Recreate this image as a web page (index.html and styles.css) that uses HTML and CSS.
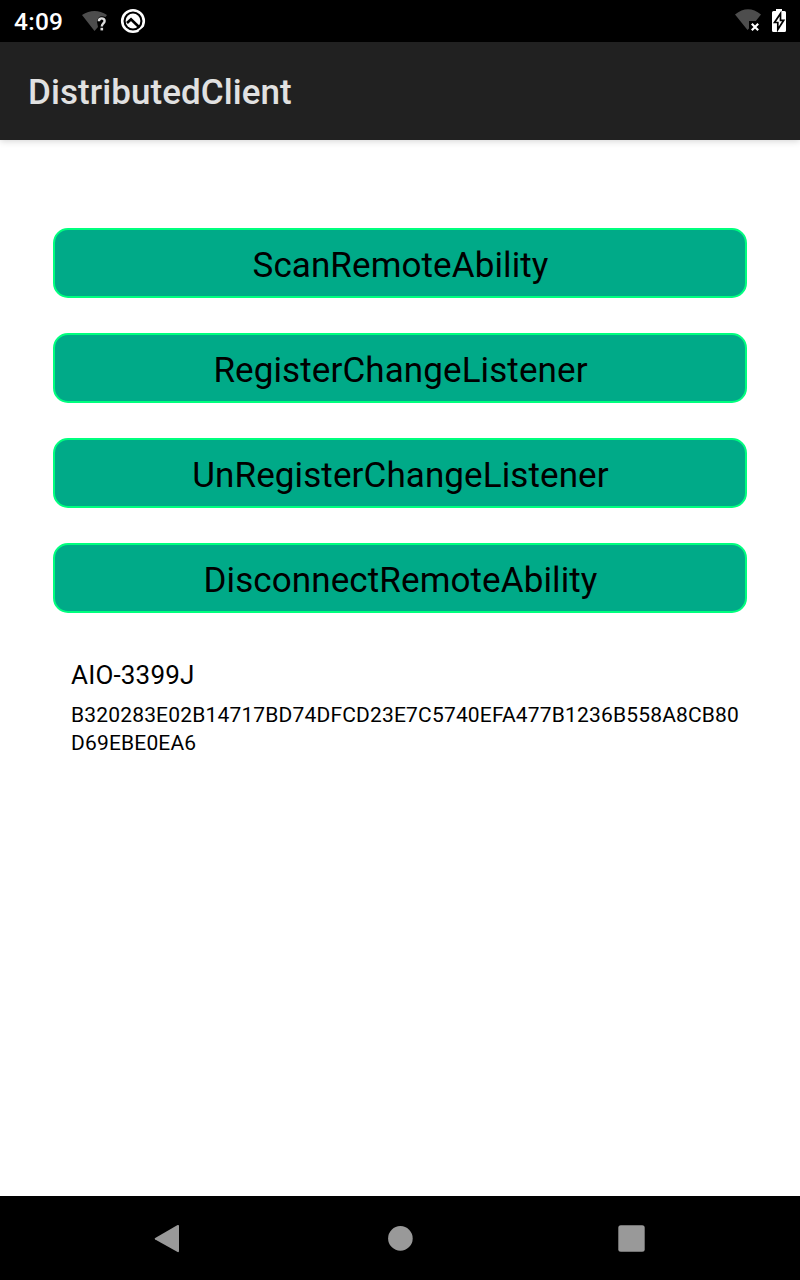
FILE: index.html
```html
<!DOCTYPE html>
<html lang="en">
<head>
<meta charset="utf-8">
<title>DistributedClient</title>
<link rel="stylesheet" href="styles.css">
</head>
<body>
<header class="status">
  <span class="clock">4:09</span>
  <svg class="wifi-unknown" width="28" height="42" viewBox="81 0 28 42">
    <path d="M82 15Q94.500 7 107 15L105.500 17Q98 14 97 22L98 27L94.500 31Z" fill="#4d4d4d"/>
    <path d="M98.900 21.200C98.900 17.500 104.600 17.500 104.600 21C104.600 23.400 101.800 23.400 101.800 26.400" fill="none" stroke="#dedede" stroke-width="2.400"/>
    <rect x="100.500" y="27.800" width="2.600" height="2.600" fill="#dedede"/>
  </svg>
  <svg class="q-badge" width="28" height="42" viewBox="119 0 28 42">
    <circle cx="133" cy="21" r="10.800" fill="none" stroke="#fff" stroke-width="2.600"/>
    <circle cx="133" cy="21" r="7.400" fill="#fff"/>
    <path d="M127 23L131 19.300L139.500 27.500" fill="none" stroke="#000" stroke-width="2.600"/>
    <path d="M139 31.500L144 27.500" fill="none" stroke="#000" stroke-width="1.200"/>
  </svg>
  <svg class="wifi-off" width="28" height="42" viewBox="734 0 28 42">
    <path d="M735 14.500Q748 4 761 14.500L755.800 21H749V28.500L747.500 30Z" fill="#4d4d4d"/>
    <path d="M751.800 23.800L758.200 30.200M758.200 23.800L751.800 30.200" stroke="#fff" stroke-width="2.200"/>
  </svg>
  <svg class="battery" width="16" height="42" viewBox="771 0 16 42">
    <path d="M776 9H782V11H784.500Q786 11 786 12.500V30.500Q786 32 784.500 32H773.500Q772 32 772 30.500V12.500Q772 11 773.500 11H776Z" fill="#fff"/>
    <path d="M780.500 13.500L774.500 22.500H777.800V29.500L783.700 20.300H780.500Z" fill="#fff" stroke="#000" stroke-width="1.700"/>
  </svg>
</header>
<div class="appbar">DistributedClient</div>
<main class="content">
  <button class="action">ScanRemoteAbility</button>
  <button class="action">RegisterChangeListener</button>
  <button class="action">UnRegisterChangeListener</button>
  <button class="action">DisconnectRemoteAbility</button>
  <section class="device">
    <div class="device-name">AIO-3399J</div>
    <div class="device-id">B320283E02B14717BD74DFCD23E7C5740EFA477B1236B558A8CB80D69EBE0EA6</div>
  </section>
</main>
<nav class="navbar">
  <svg width="28" height="32" viewBox="153 1222 28 32"><path d="M155.200 1238L177.600 1225Q179 1224.500 179 1226V1251Q179 1252.500 177.600 1252L155.200 1239.400Q154 1238.700 155.200 1238Z" fill="#999"/></svg>
  <svg width="28" height="32" viewBox="385 1222 28 32"><circle cx="400.400" cy="1238.400" r="12.300" fill="#999"/></svg>
  <svg width="28" height="32" viewBox="617 1222 28 32"><rect x="618.300" y="1225.300" width="26.400" height="26.400" rx="2.500" fill="#999"/></svg>
</nav>
</body>
</html>
```
FILE: styles.css
```css
* { box-sizing: border-box; }
body {
  margin: 0;
  width: 800px;
  height: 1280px;
  display: flex;
  flex-direction: column;
  overflow: hidden;
  background: #fff;
  color: #000;
  font-family: Roboto, sans-serif;
}
svg { display: block; flex: none; }
.status {
  height: 42px;
  flex: none;
  display: flex;
  background: #000;
  padding: 0 13px 0 14px;
}
.clock {
  width: 67px;
  color: #fff;
  font-size: 24.5px;
  font-weight: 500;
  letter-spacing: 0.25px;
  line-height: 44px;
}
.q-badge { margin-left: 10px; }
.wifi-off { margin-left: auto; }
.battery { margin-left: 9px; }
.appbar {
  height: 98px;
  flex: none;
  padding-left: 28px;
  background: #212121;
  color: #e1e1e1;
  font-size: 35px;
  font-weight: 500;
  letter-spacing: 0.07px;
  line-height: 102px;
  box-shadow: 0 1px 7px rgba(0, 0, 0, 0.18);
}
.content {
  flex: 1;
  display: flex;
  flex-direction: column;
  gap: 35px;
  padding: 88px 53px 0;
}
.action {
  height: 70px;
  flex: none;
  padding: 4px 0 0 1px;
  border: 2px solid #00ff7f;
  border-radius: 15px;
  background: #00aa88;
  color: #000;
  font: 400 35px/41px Roboto, sans-serif;
  letter-spacing: 0.1px;
}
.device { padding: 11px 0 0 18px; }
.device-name {
  font-size: 26px;
  line-height: 32px;
  letter-spacing: 0.18px;
}
.device-id {
  margin-top: 10px;
  width: 672px;
  font-size: 21px;
  line-height: 28px;
  letter-spacing: 0.175px;
  overflow-wrap: anywhere;
}
.navbar {
  height: 84px;
  flex: none;
  display: flex;
  justify-content: space-between;
  align-items: center;
  padding: 0 155px 0 153px;
  background: #000;
}
```
